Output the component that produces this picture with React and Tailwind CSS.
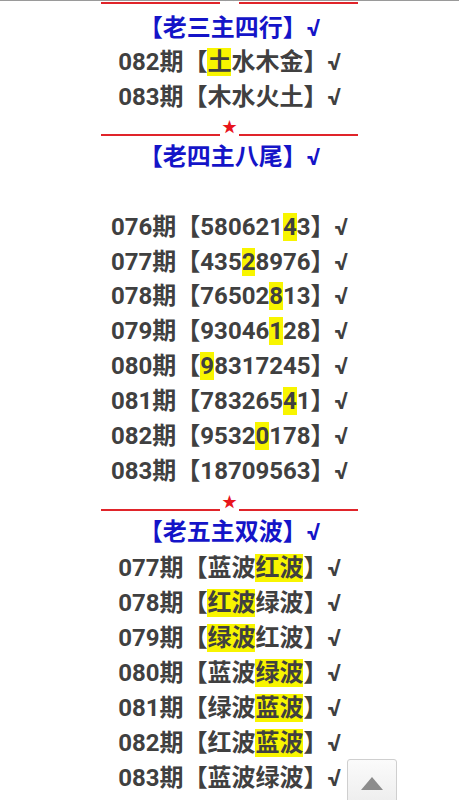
import React from 'react';

const font = { fontFamily: 'Roboto, "Noto Sans CJK SC", sans-serif' };

// 一条红线 + 星星
function Divider({ className }) {
  return (
    <div className={`flex items-end justify-center ${className}`}>
      <div className="w-[119px] h-[2px] bg-[#e0242a]" />
      <span className="w-[19px] text-center text-[15px] leading-none text-[#e8141c] mb-[1px]">★</span>
      <div className="w-[119px] h-[2px] bg-[#e0242a]" />
    </div>
  );
}

function Title({ text, className = '' }) {
  return (
    <div className={`text-center text-[24px] font-bold text-[#1414c8] ${className}`}>
      【{text}】√
    </div>
  );
}

// parts: [text, highlighted]
function Row({ issue, parts }) {
  return (
    <div className="text-center text-[24px] leading-[34.85px] h-[34.85px] font-bold text-[#404040]">
      {issue}期【
      {parts.map(([t, hl], i) =>
        hl ? (
          <span key={i} className="bg-[#f8f500]">{t}</span>
        ) : (
          <span key={i}>{t}</span>
        )
      )}
      】√
    </div>
  );
}

const wuxing = [
  ['082', [['土', true], ['水木金', false]]],
  ['083', [['木水火土', false]]],
];

const weishu = [
  ['076', [['580621', false], ['4', true], ['3', false]]],
  ['077', [['435', false], ['2', true], ['8976', false]]],
  ['078', [['76502', false], ['8', true], ['13', false]]],
  ['079', [['93046', false], ['1', true], ['28', false]]],
  ['080', [['9', true], ['8317245', false]]],
  ['081', [['783265', false], ['4', true], ['1', false]]],
  ['082', [['9532', false], ['0', true], ['178', false]]],
  ['083', [['18709563', false]]],
];

const bose = [
  ['077', [['蓝波', false], ['红波', true]]],
  ['078', [['红波', true], ['绿波', false]]],
  ['079', [['绿波', true], ['红波', false]]],
  ['080', [['蓝波', false], ['绿波', true]]],
  ['081', [['绿波', false], ['蓝波', true]]],
  ['082', [['红波', false], ['蓝波', true]]],
  ['083', [['蓝波绿波', false]]],
];

export default function App() {
  return (
    <div className="relative w-[459px] h-[800px] overflow-hidden bg-white border-t border-[#9a9a9a]" style={font}>
      <Divider className="h-[4px] -mt-[1px]" />

      <Title text="老三主四行" className="h-[41px] leading-[49px]" />
      {wuxing.map(([issue, parts]) => (
        <Row key={issue} issue={issue} parts={parts} />
      ))}

      <Divider className="h-[21px]" />
      <Title text="老四主八尾" className="h-[37px] leading-[43px]" />
      <div className="h-[37px]" />
      {weishu.map(([issue, parts]) => (
        <Row key={issue} issue={issue} parts={parts} />
      ))}

      <Divider className="h-[23px]" />
      <Title text="老五主双波" className="h-[40px] leading-[42px]" />
      {bose.map(([issue, parts]) => (
        <Row key={issue} issue={issue} parts={parts} />
      ))}

      {/* 回到顶部 */}
      <button className="absolute left-[347px] top-[758px] w-[50px] h-[50px] rounded-[3px] border border-[#cfcfcf] bg-gradient-to-b from-[#fbfbfb] to-[#ececec] flex justify-center pt-[17px]">
        <svg width="22" height="13" viewBox="0 0 22 13">
          <polygon points="11,0 22,13 0,13" fill="#8c8c8c" />
        </svg>
      </button>
    </div>
  );
}
